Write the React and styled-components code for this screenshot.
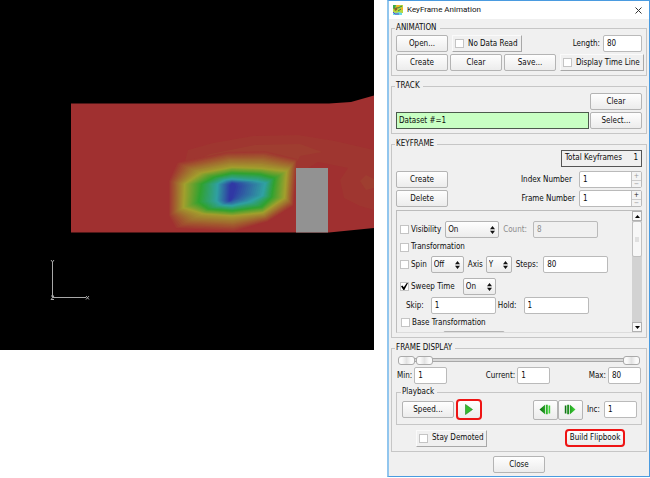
import React from "react";
import styled, { createGlobalStyle, css } from "styled-components";

const GlobalStyle = createGlobalStyle`
  *, *::before, *::after { box-sizing: border-box; }
  body { margin: 0; background: #fff; }
  body, button, input, select {
    font-family: "DejaVu Sans Condensed", "Noto Sans", sans-serif;
    font-size: 8px;
    line-height: 12px;
    color: #0c0c0c;
  }
`;

const Page = styled.main`
  display: grid;
  grid-template-columns: minmax(0, 1fr) 263px;
  gap: 13px;
  align-items: start;
`;

const Scene = styled.svg`
  display: block;
  width: 100%;
  height: auto;
  background: #000;
`;

const Dialog = styled.section`
  background: #f0f0f0;
  border: 1px solid #4a9be0;
  border-left: 2px solid #92c6ee;
  padding-bottom: 3px;
`;

const TitleBar = styled.header`
  display: flex;
  align-items: center;
  gap: 4px;
  height: 18px;
  padding: 0 7px 0 4px;
  background: #fff;
`;

const Title = styled.h1`
  flex: 1;
  margin: 0;
  font: 400 8px/12px Roboto, "Noto Sans", sans-serif;
  color: #111;
`;

const IconButton = styled.button`
  display: flex;
  padding: 0;
  border: 0;
  background: none;
`;

const Body = styled.div`
  display: flex;
  flex-direction: column;
  gap: 4px;
  padding: 3px 2px 0;
`;

const Group = styled.fieldset`
  display: flex;
  flex-direction: column;
  min-width: 0;
  margin: 0;
  padding: ${(p) => p.$pad || "1px 4px 4px"};
  border: 1px solid #c6c6c6;
`;

const Legend = styled.legend`
  margin-left: -1px;
  padding: 0 3px 0 1px;
  line-height: 12px;
`;

const Row = styled.div`
  display: flex;
  align-items: center;
  gap: ${(p) => p.$gap ?? 2}px;
  min-height: ${(p) => p.$height ?? 17}px;
  margin-top: ${(p) => p.$top ?? 0}px;
  padding: ${(p) => p.$pad || "0"};
`;

const Spacer = styled.span`
  flex: 1;
`;

const PushButton = styled.button`
  display: flex;
  align-items: center;
  justify-content: center;
  flex: none;
  width: ${(p) => p.$width ?? 52}px;
  height: ${(p) => p.$height ?? 17}px;
  padding: 0;
  border: 1px solid #b4b4b4;
  border-radius: 2px;
  background: linear-gradient(#fefefe, #ececec);
  white-space: nowrap;
  ${(p) => p.$marked && css`
    border: 2px solid #ee1414;
    border-radius: 4px;
  `}
`;

const CheckLabel = styled.label`
  display: flex;
  align-items: center;
  flex: none;
  gap: 2px;
  white-space: nowrap;
  ${(p) => p.$raised && css`
    width: ${p.$raised}px;
    height: 17px;
    padding-left: 2px;
    gap: 4px;
    border: 1px solid;
    border-color: #fafafa #a8a8a8 #a8a8a8 #fafafa;
  `}
`;

const CheckBox = styled.input.attrs({ type: "checkbox" })`
  appearance: none;
  display: grid;
  place-items: center;
  width: 9px;
  height: 9px;
  margin: 0;
  border: 1px solid #c4c4c4;
  background: #fff;
  &:checked::after {
    content: "";
    width: 7px;
    height: 7px;
    background: #000;
    clip-path: polygon(0 45%, 20% 35%, 40% 62%, 82% 0, 100% 0, 48% 100%, 34% 100%);
  }
`;

const Field = styled.label`
  display: flex;
  align-items: center;
  flex: none;
  gap: ${(p) => p.$gap ?? 3}px;
  white-space: nowrap;
  color: ${(p) => (p.$muted ? "#8c8c8c" : "inherit")};
`;

const TextBox = styled.input`
  width: ${(p) => p.$width}px;
  height: 17px;
  padding: 0 3px;
  border: 1px solid #bababa;
  border-radius: 2px;
  background: #fff;
  &:disabled { background: #f0f0f0; color: #8c8c8c; }
`;

const TrackBox = styled.input`
  flex: 1;
  min-width: 0;
  height: 17px;
  padding: 0 2px;
  border: 1px solid #4c5a4c;
  background: #c8ffc3;
`;

const Counter = styled.output`
  display: flex;
  justify-content: space-between;
  width: 81px;
  height: 17px;
  padding: 1px 3px;
  border: 1px solid #555;
`;

const SpinBox = styled.span`
  display: grid;
  grid-template-columns: 1fr 10px;
  width: 63px;
  height: 17px;
  border: 1px solid #bababa;
  border-radius: 2px;
  background: #fff;
  overflow: hidden;
`;

const SpinInput = styled.input`
  min-width: 0;
  padding: 0 3px;
  border: 0;
  background: none;
`;

const SpinSteps = styled.span`
  display: grid;
  grid-template-rows: 1fr 1fr;
  border-left: 1px solid #c4c4c4;
  background: #f4f4f4;
`;

const StepButton = styled.button`
  padding: 0;
  border: 0;
  background: none;
  font-size: 7px;
  line-height: 7px;
  color: ${(p) => (p.disabled ? "#999" : "#222")};
  & + & { border-top: 1px solid #ccc; }
`;

const SelectFrame = styled.span`
  display: grid;
  align-items: center;
  width: ${(p) => p.$width}px;
  height: 17px;
  & > * { grid-area: 1 / 1; }
  & > svg { justify-self: end; margin-right: 4px; pointer-events: none; }
`;

const Select = styled.select`
  appearance: none;
  width: 100%;
  height: 17px;
  padding: 0 2px;
  border: 1px solid #b4b4b4;
  border-radius: 2px;
  background: linear-gradient(#fefefe, #ececec);
`;

const ScrollPane = styled.div`
  display: grid;
  grid-template-columns: minmax(0, 1fr) 10px;
  height: 123px;
  margin-top: 3px;
  border: 1px solid #bcbcbc;
  border-right-width: 0;
  border-bottom-color: #dcdcdc;
  overflow: hidden;
`;

const PaneContent = styled.div`
  padding: 10px 0 0 3px;
  overflow: hidden;
`;

const PaneTab = styled.div`
  width: 62px;
  height: 10px;
  margin: 0 0 0 43px;
  border: 1px solid #b4b4b4;
  border-radius: 2px;
`;

const ScrollBar = styled.div`
  display: grid;
  grid-template-rows: 10px 36px 1fr 10px;
  background: #d2d2d2;
`;

const ScrollArrow = styled.button`
  display: grid;
  place-items: center;
  grid-row: ${(p) => p.$row};
  padding: 0;
  border: 1px solid #b0b0b0;
  background: #f8f8f8;
`;

const ScrollThumb = styled.div`
  display: grid;
  place-items: center;
  border: 1px solid #c0c0c0;
  border-radius: 2px;
  background: #f7f7f7;
  &::after {
    content: "";
    width: 4px;
    height: 5px;
    background: #e0e0e0;
  }
`;

const RangeStack = styled.div`
  display: grid;
  align-items: center;
  height: 10px;
  margin: 0 2px;
  & > * { grid-area: 1 / 1; }
`;

const RangeGroove = styled.div`
  height: 4px;
  margin: 0 4px;
  border: 1px solid #a8a8a8;
  background: #d8d8d8;
`;

const thumb = css`
  appearance: none;
  width: 17px;
  height: 9px;
  border: 1px solid #aaa;
  border-radius: 3px;
  background: linear-gradient(90deg, #fafafa 20%, #e2e2e2 50%, #fafafa 80%);
  pointer-events: auto;
`;

const Range = styled.input.attrs({ type: "range" })`
  appearance: none;
  width: 100%;
  height: 10px;
  margin: 0;
  background: none;
  pointer-events: none;
  &::-webkit-slider-thumb { ${thumb} }
  &::-moz-range-thumb { ${thumb} }
`;

const Footer = styled.footer`
  display: flex;
  justify-content: center;
  margin-top: 4px;
`;

/* Contour rings of the plume, from the outer edge to the core. */
const rings = [
  { color: [160, 48, 48], points: [[168, 216], [168, 181], [176, 162], [226, 151], [266, 150], [298, 158], [294, 206], [268, 222], [234, 232], [174, 229]] },
  { color: [162, 160, 46], points: [[183, 208], [184, 184], [200, 173], [232, 167], [260, 168], [287, 171], [285, 198], [263, 213], [232, 216], [203, 214]] },
  { color: [48, 162, 48], points: [[198, 202], [201, 184], [214, 177], [232, 173], [260, 174], [275, 178], [272, 197], [262, 207], [232, 211], [208, 209]] },
  { color: [48, 160, 162], points: [[216, 201], [217, 184], [225, 180], [232, 179], [257, 181], [266, 183], [263, 196], [250, 202], [232, 206], [221, 205]] },
  { color: [48, 56, 164], points: [[229, 200], [230, 185], [231, 184], [232, 183], [235, 184], [236, 187], [234, 193], [233, 197], [231, 200], [230, 201]] },
];

const STEPS = 14;
const mix = (a, b, t) => a + (b - a) * t;
const bands = rings.slice(0, -1).flatMap((ring, i) =>
  Array.from({ length: STEPS }, (_, s) => {
    const t = (s + 1) / STEPS;
    const next = rings[i + 1];
    return {
      fill: `rgb(${ring.color.map((c, k) => Math.round(mix(c, next.color[k], t))).join(",")})`,
      points: ring.points.map((p, k) => p.map((v, d) => mix(v, next.points[k][d], t).toFixed(1)).join(",")).join(" "),
    };
  })
);

function FlowScene() {
  return (
    <Scene viewBox="0 0 374 350" role="img" aria-label="Flow field around a block">
      <path d="M71 103.500H329L351 102L374 95.500V228L329 232.500H71Z" fill="#a03030" />
      <g fill="#a06a30">
        <path d="M188 150L213 143L253 136L298 135L335 141L374 150V210L360 206L344 198L340 180L348 168L318 162L295 176L230 178L182 172Z" opacity=".1" />
        <path d="M210 154L255 145L300 144L322 152L300 156L295 166L220 170L186 166Z" opacity=".14" />
        <path d="M360 181L366 175L374 179V188L366 190Z" opacity=".16" />
      </g>
      {bands.map((b, i) => <polygon key={i} points={b.points} fill={b.fill} />)}
      <rect x="296" y="168" width="32" height="64.500" fill="#929292" />
      <g stroke="#a8a8a8" fill="none">
        <path d="M52.500 264V297.500H86" />
        <path d="M51 260L52.500 262L54 260M52.500 262V264M86 296L89 299.500M89 296L86 299.500M51 296H54L51 299.500H54" />
      </g>
    </Scene>
  );
}

function AppIcon() {
  return (
    <svg width="10" height="10" viewBox="0 0 10 10" aria-hidden="true">
      <rect width="10" height="8" fill="#b8d840" />
      <path d="M0 0H3L2 3L0 4Z" fill="#38a84c" />
      <path d="M3 0H7L6 2H4ZM8 3L10 2V5H8Z" fill="#f0b428" />
      <path d="M1 3L5 2L4 5L2 6Z" fill="#8c6428" />
      <path d="M5 3L9 1M5 6L8 4" stroke="#368054" />
      <path d="M0 7L3 8L6 7L9 8V10H0Z" fill="#64dce8" />
      <path d="M0 7L2 9H6" stroke="#604cc0" fill="none" />
    </svg>
  );
}

function Option({ raised, children, ...rest }) {
  return <CheckLabel $raised={raised}><CheckBox {...rest} />{children}</CheckLabel>;
}

function TextField({ label, value, width, gap, disabled }) {
  return (
    <Field $gap={gap} $muted={disabled}>
      {label}
      <TextBox $width={width} defaultValue={value} disabled={disabled} />
    </Field>
  );
}

function Dropdown({ label, value, options, width }) {
  return (
    <SelectFrame $width={width}>
      <Select aria-label={label} defaultValue={value}>
        {options.map((o) => <option key={o}>{o}</option>)}
      </Select>
      <svg width="5" height="8" viewBox="0 0 5 8"><path d="M0 3.300L2.500 0L5 3.300ZM0 4.700L2.500 8L5 4.700Z" fill="#111" /></svg>
    </SelectFrame>
  );
}

function Stepper({ label, gap, upDisabled }) {
  return (
    <Field $gap={gap}>
      {label}
      <SpinBox>
        <SpinInput defaultValue="1" aria-label={label} />
        <SpinSteps>
          <StepButton aria-label="Increase" disabled={upDisabled}>+</StepButton>
          <StepButton aria-label="Decrease" disabled>−</StepButton>
        </SpinSteps>
      </SpinBox>
    </Field>
  );
}

function FrameIcon({ back }) {
  return (
    <svg width="12" height="11" viewBox="0 0 12 11" aria-hidden="true">
      <defs>
        <linearGradient id={back ? "back" : "forward"}>
          <stop offset="0" stopColor="#0d6e12" />
          <stop offset="1" stopColor="#3fd836" />
        </linearGradient>
      </defs>
      {back ? (
        <path d="M.5 5.500L6 .8V10.200ZM6.800 .8H8.800V10.200H6.800ZM9.600 1.500H11.200V9.500H9.600Z" fill="url(#back)" />
      ) : (
        <path d="M11.500 5.500L6 .8V10.200ZM3.200 .8H5.200V10.200H3.200ZM.8 1.500H2.400V9.500H.8Z" fill="url(#forward)" />
      )}
    </svg>
  );
}

const WideGroup = styled(Group)`
  flex: 1;
`;

function PlaybackGroup() {
  return (
    <WideGroup $pad="1px 4px 4px 5px">
      <Legend>Playback</Legend>
      <Row $height={21}>
        <PushButton>Speed...</PushButton>
        <PushButton $width={26} $height={21} $marked aria-label="Play">
          <svg width="8" height="11" viewBox="0 0 8 11"><path d="M.5 .5L7.500 5.500L.5 10.500Z" fill="#35bb2e" stroke="#1b851b" strokeWidth=".6" /></svg>
        </PushButton>
        <Spacer />
        <Row $gap={0}>
          <PushButton $width={25} $height={20} aria-label="Previous frame"><FrameIcon back /></PushButton>
          <PushButton $width={25} $height={20} aria-label="Next frame"><FrameIcon /></PushButton>
        </Row>
        <Row $pad="0 0 0 2px"><TextField label="Inc:" value="1" width={33} gap={4} /></Row>
      </Row>
    </WideGroup>
  );
}

export default function App() {
  return (
    <>
      <GlobalStyle />
      <Page>
        <FlowScene />
        <Dialog aria-label="KeyFrame Animation">
          <TitleBar>
            <AppIcon />
            <Title>KeyFrame Animation</Title>
            <IconButton aria-label="Close window">
              <svg width="7" height="7" viewBox="0 0 7 7"><path d="M.5 .5L6.500 6.500M6.500 .5L.5 6.500" stroke="#333" /></svg>
            </IconButton>
          </TitleBar>
          <Body>
            <Group>
              <Legend>ANIMATION</Legend>
              <Row $gap={4}>
                <PushButton>Open...</PushButton>
                <Option raised={70}>No Data Read</Option>
                <Spacer />
                <TextField label="Length:" value="80" width={39} />
              </Row>
              <Row $top={2}>
                <PushButton>Create</PushButton>
                <PushButton>Clear</PushButton>
                <PushButton>Save...</PushButton>
                <Spacer />
                <Option raised={84}>Display Time Line</Option>
              </Row>
            </Group>

            <Group>
              <Legend>TRACK</Legend>
              <Row><Spacer /><PushButton>Clear</PushButton></Row>
              <Row $top={2} $gap={1}>
                <TrackBox aria-label="Track" defaultValue="Dataset #=1" />
                <PushButton>Select...</PushButton>
              </Row>
            </Group>

            <Group $pad="0 4px 4px">
              <Legend>KEYFRAME</Legend>
              <Row><Spacer /><Counter><span>Total Keyframes</span><span>1</span></Counter></Row>
              <Row $top={4}>
                <PushButton>Create</PushButton>
                <Spacer />
                <Stepper label="Index Number" gap={7} upDisabled />
              </Row>
              <Row $top={2}>
                <PushButton>Delete</PushButton>
                <Spacer />
                <Stepper label="Frame Number" gap={4} />
              </Row>
              <ScrollPane>
                <PaneContent>
                  <Row $gap={4}>
                    <Option>Visibility</Option>
                    <Dropdown label="Visibility" value="On" options={["On", "Off"]} width={54} />
                    <TextField label="Count:" value="8" width={65} gap={6} disabled />
                  </Row>
                  <Row $height={18}><Option>Transformation</Option></Row>
                  <Row $gap={4}>
                    <Option>Spin</Option>
                    <Dropdown label="Spin" value="Off" options={["Off", "On"]} width={33} />
                    <Field>Axis <Dropdown label="Axis" value="Y" options={["X", "Y", "Z"]} width={26} /></Field>
                    <TextField label="Steps:" value="80" width={65} gap={5} />
                  </Row>
                  <Row $top={5} $gap={8}>
                    <Option defaultChecked>Sweep Time</Option>
                    <Dropdown label="Sweep Time" value="On" options={["On", "Off"]} width={33} />
                  </Row>
                  <Row $top={2} $pad="0 0 0 6px">
                    <TextField label="Skip:" value="1" width={65} gap={7} />
                    <TextField label="Hold:" value="1" width={65} gap={7} />
                  </Row>
                  <Row $pad="0 0 0 1px"><Option>Base Transformation</Option></Row>
                  <PaneTab />
                </PaneContent>
                <ScrollBar>
                  <ScrollArrow $row={1} aria-label="Scroll up"><svg width="5" height="3"><path d="M0 3L2.500 0L5 3Z" /></svg></ScrollArrow>
                  <ScrollThumb />
                  <ScrollArrow $row={4} aria-label="Scroll down"><svg width="5" height="3"><path d="M0 0L2.500 3L5 0Z" /></svg></ScrollArrow>
                </ScrollBar>
              </ScrollPane>
            </Group>

            <Group>
              <Legend>FRAME DISPLAY</Legend>
              <RangeStack>
                <RangeGroove />
                <Range aria-label="Minimum frame" defaultValue="0" />
                <Range aria-label="Maximum frame" defaultValue="100" />
                <Range aria-label="Current frame" defaultValue="8" />
              </RangeStack>
              <Row $top={2} $pad="0 1px">
                <TextField label="Min:" value="1" width={33} gap={2} />
                <Spacer />
                <TextField label="Current:" value="1" width={33} gap={2} />
                <Spacer />
                <TextField label="Max:" value="80" width={33} gap={2} />
              </Row>
              <Row $top={2}>
                <PlaybackGroup />
              </Row>
              <Row $top={4} $pad="0 17px 0 20px">
                <Option raised={71}>Stay Demoted</Option>
                <Spacer />
                <PushButton $width={60} $height={18} $marked>Build Flipbook</PushButton>
              </Row>
            </Group>
          </Body>
          <Footer><PushButton>Close</PushButton></Footer>
        </Dialog>
      </Page>
    </>
  );
}
